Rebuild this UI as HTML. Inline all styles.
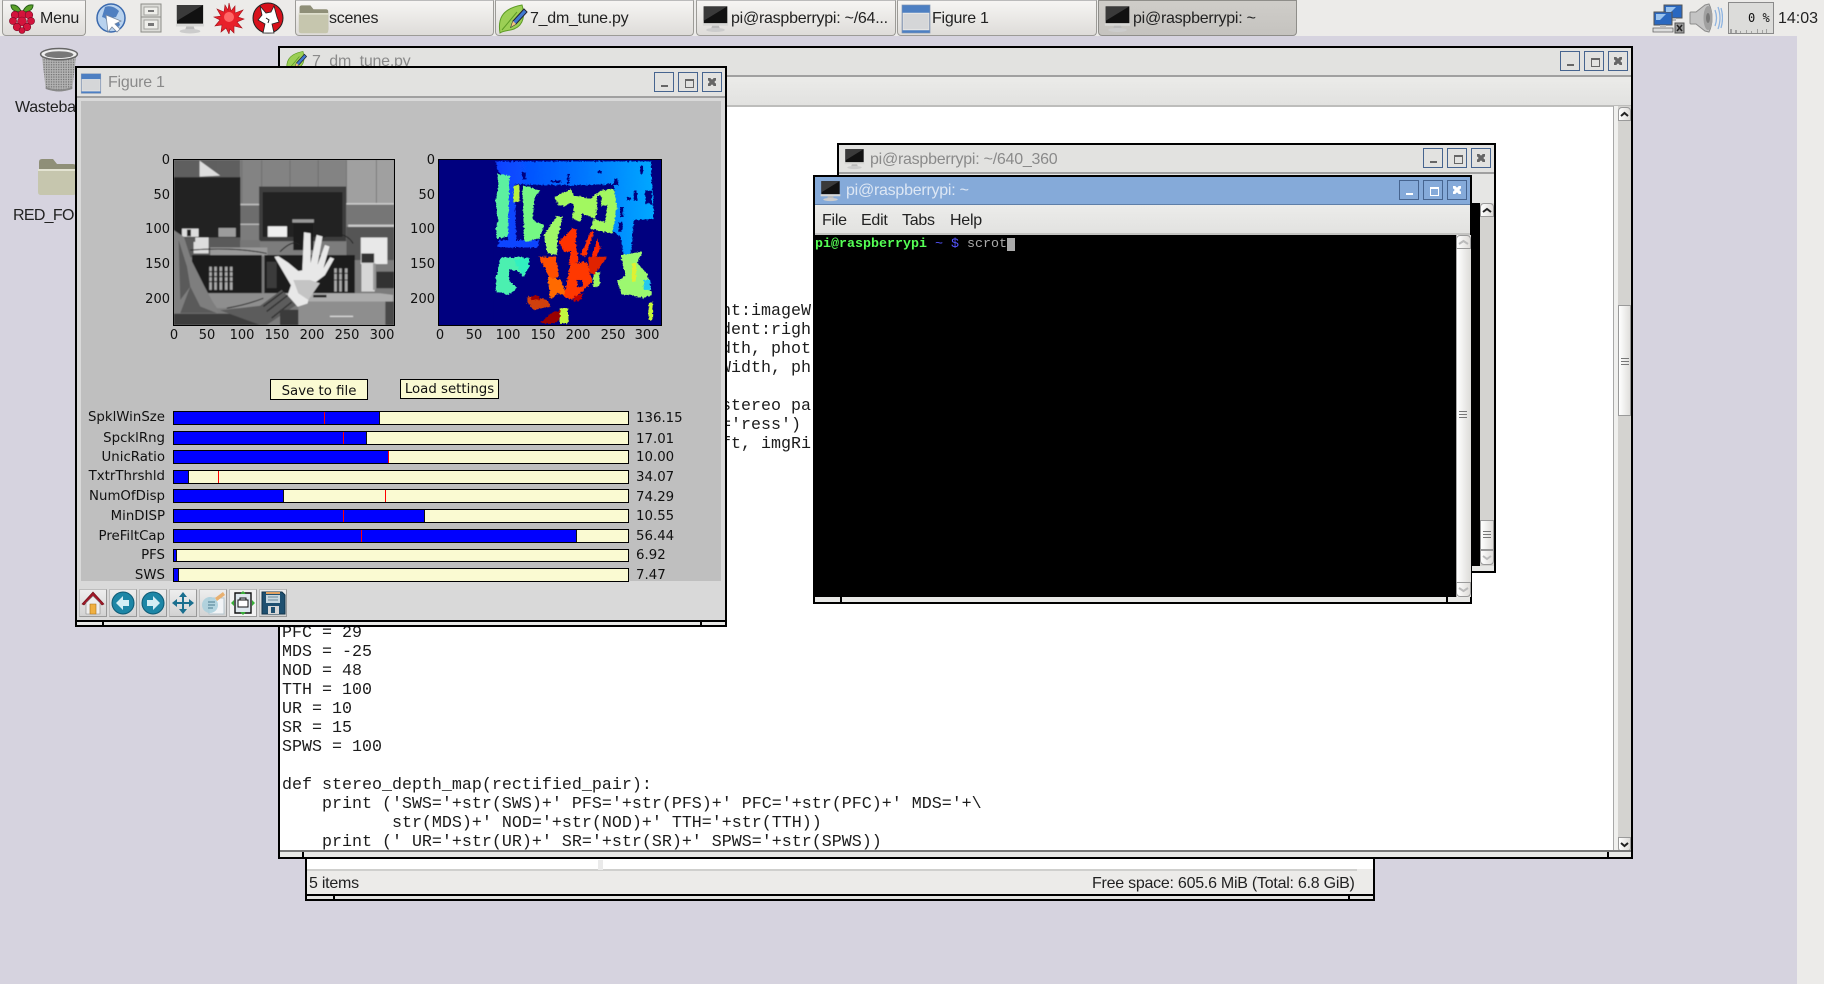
<!DOCTYPE html>
<html><head><meta charset="utf-8"><title>Desktop</title>
<style>
html,body{margin:0;padding:0;width:1824px;height:984px;overflow:hidden;background:#d6d3df}
*{box-sizing:border-box}
body{font-family:"Liberation Sans",sans-serif;position:relative}
.a,.t{position:absolute}
.t{white-space:pre;line-height:1}
.s16{font-size:16px;letter-spacing:-.25px}
.pb{position:absolute;top:0;height:36px;border:1px solid #9c9b97;border-top-color:#bbb;border-radius:0 0 4px 4px;background:linear-gradient(#f6f5f3,#dedcd9);font-size:16px;letter-spacing:-.25px;color:#222}
.pb.on{background:linear-gradient(#cfcdc9,#c5c3bf);border-color:#8f8e8a}
.pb span{position:absolute;top:9px;white-space:pre}
.win{position:absolute;border:2px solid #000;background:#e6e6e4}
.tb{position:absolute;left:0;right:0;top:0;background:#e2e2e0;border-bottom:2px solid #a0a0a0}
.wb{position:absolute;width:20px;height:20px;border:1px solid #46648f;background:transparent}
.wb.m::after{content:"";position:absolute;left:6px;bottom:4px;width:7px;height:2px;background:#666}
.wb.x1::after{content:"";position:absolute;left:6px;top:6px;width:7px;height:6px;border:1px solid #666;border-top-width:2px}
.wb.xb::after{content:"";position:absolute;left:5px;top:5px;width:8px;height:8px;background:linear-gradient(45deg,transparent 36%,#666 36% 64%,transparent 64%),linear-gradient(-45deg,transparent 36%,#666 36% 64%,transparent 64%)}
.act .wb.m::after{background:#fff}.act .wb.x1::after{border-color:#fff}
.act .wb.xb::after{background:linear-gradient(45deg,transparent 36%,#fff 36% 64%,transparent 64%),linear-gradient(-45deg,transparent 36%,#fff 36% 64%,transparent 64%)}
.mono{font-family:"Liberation Mono",monospace;font-size:16.67px;color:#1b1b1b;line-height:19px;height:19px}
.tick{font:13px/14px "DejaVu Sans",sans-serif;color:#111;white-space:pre;position:absolute}
.r{text-align:right;width:40px}.c{text-align:center;width:40px}
.sl{position:absolute;left:173px;width:456px;height:14px;background:#fafad2;border:1.5px solid #000}
.sl i{position:absolute;left:0;top:0;bottom:0;background:#0000ff;border-right:1px solid #111}
.sl b{position:absolute;top:0;bottom:0;width:1px;background:#f00}
.lab{position:absolute;font:13.33px/16px "DejaVu Sans",sans-serif;color:#111;white-space:pre}
.btn{position:absolute;background:#fafad2;border:1.5px solid #000;font:13.33px/16px "DejaVu Sans",sans-serif;color:#111;text-align:center}
.tool{position:absolute;top:589px;width:28px;height:28px;background:linear-gradient(#eee,#d2d2d2);border:1px solid #bdbdbd;border-right-color:#999;border-bottom-color:#999}
.sbb{position:absolute;background:linear-gradient(90deg,#fff,#dedcd9);border:1px solid #9a9a9a;border-radius:0 0 4px 4px}
.grip{position:absolute;width:8px;height:8px;background:repeating-linear-gradient(#777 0 1px,transparent 1px 3px)}
.hnd{position:absolute;width:2px;background:#000}
.chev{position:absolute;fill:none;stroke-width:2}
</style></head>
<body>
<svg width="0" height="0" style="position:absolute">
<defs>
<symbol id="mon" viewBox="0 0 32 32">
<path d="M2 1h28v20H2z" fill="#111"/><path d="M2 1h28L2 18z" fill="#3a3a3a"/><path d="M1 21h30v3H1z" fill="#d8d8d6"/><path d="M12 24h8l1 3h-10z" fill="#bbb"/><ellipse cx="16" cy="29" rx="11" ry="2.4" fill="#ccc"/>
</symbol>
<symbol id="fold" viewBox="0 0 40 40">
<path d="M2 6q0-3 3-3h11l4 5h16q3 0 3 3v23q0 3-3 3H5q-3 0-3-3z" fill="#8f8f78"/><path d="M1 13h38v23q0 3-3 3H4q-3 0-3-3z" fill="#c6c6ae"/><path d="M1 13h38v2H1z" fill="#e3e3d2"/>
</symbol>
<symbol id="fig" viewBox="0 0 24 24">
<path d="M1 1h22v22H1z" fill="#e4e4e4" stroke="#8a9bb5"/><path d="M1 1h22v6H1z" fill="#4d7fc2"/><path d="M1 21h22v2H1z" fill="#4d7fc2"/><path d="M2 8h20v12H2z" fill="#d5d6d8"/>
</symbol>
<symbol id="leaf" viewBox="0 0 32 32">
<path d="M3 30C1 18 3 6 25 2c3 10 2 20-8 24-5 2-10 1-14 4z" fill="#9ccf55" stroke="#5d9b25"/><path d="M5 27L20 9" stroke="#5d9b25" stroke-width="1"/>
<path d="M14 24l2-6 11-12 3 3-11 12z" fill="#3f78d0" stroke="#223"/><path d="M14 24l2-6 3 3z" fill="#f3c480"/>
</symbol>
<filter id="bl"><feGaussianBlur stdDeviation="1.7"/></filter>
<filter id="jag"><feTurbulence type="fractalNoise" baseFrequency="0.16" numOctaves="2" seed="4"/><feDisplacementMap in="SourceGraphic" scale="11" xChannelSelector="R" yChannelSelector="G"/></filter>
<linearGradient id="topb" x1="0" x2="1"><stop offset="0" stop-color="#0a40ff"/><stop offset=".5" stop-color="#0070ff"/><stop offset="1" stop-color="#00a8ff"/></linearGradient>
</defs>
</svg>

<!-- desktop right strip and panel -->
<div class="a" style="left:1797px;top:36px;width:27px;height:948px;background:#ecebe9"></div>
<div class="a" style="left:0;top:0;width:1824px;height:36px;background:#ecebe9"></div>

<div class="pb" style="left:2px;width:84px"><span style="left:37px;top:9px">Menu</span>
<svg class="a" style="left:4px;top:2px" width="30" height="31" viewBox="0 0 30 31"><path d="M14 8C10 0 5 2 4 2c0 4 3 7 10 7zM16 8c4-8 9-6 10-6 0 4-3 7-10 7z" fill="#5aa028" stroke="#24591a"/><g fill="#d3143c" stroke="#7a0b26" stroke-width=".6"><circle cx="15" cy="12" r="4.5"/><circle cx="8" cy="12" r="3.8"/><circle cx="22" cy="12" r="3.8"/><circle cx="6" cy="18" r="3.6"/><circle cx="24" cy="18" r="3.6"/><circle cx="15" cy="18.5" r="4.5"/><circle cx="10" cy="24" r="3.8"/><circle cx="20" cy="24" r="3.8"/><circle cx="15" cy="27.5" r="3"/></g></svg>
</div>
<!-- launchers -->
<svg class="a" style="left:96px;top:2px" width="30" height="32" viewBox="0 0 30 32"><circle cx="15" cy="16" r="14" fill="#b8d2ee" stroke="#3a69ad" stroke-width="1.5"/><path d="M9 5c5-2 10 0 14 4l-3 6-5 1-2 6-4-6-3-1z" fill="#4f7fc0"/><path d="M18 18l3 8 3-3-2-5z" fill="#4f7fc0"/><path d="M10 13l2 17 4-5 5 5 3-3-5-5 6-3z" fill="#fff" stroke="#7788a0" stroke-width=".8"/></svg>
<svg class="a" style="left:139px;top:3px" width="24" height="30" viewBox="0 0 24 30"><path d="M2 1h20v28H2z" fill="#dcdcd8" stroke="#8c8c88"/><path d="M2 14h20" stroke="#8c8c88"/><path d="M5 4h14v8H5zM5 17h14v9H5z" fill="#eeeeea" stroke="#a2a29e"/><path d="M9 7h6v2H9zM9 20h6v3H9z" fill="#777"/></svg>
<svg class="a" style="left:174px;top:4px" width="32" height="30"><use href="#mon" width="32" height="30"/></svg>
<svg class="a" style="left:213px;top:2px" width="32" height="32" viewBox="0 0 32 32"><path d="M16 1l2 8 4-5 0 7 8-3-5 7 6 2-7 3 5 6-8-2 0 7-4-4-1 5-3-6-5 4 1-7-7 1 5-6-6-3 7-1-4-7 7 3 1-7 3 5z" fill="#e8202a" stroke="#a01018" stroke-width=".6"/><circle cx="16" cy="15" r="5" fill="#f66"/></svg>
<svg class="a" style="left:252px;top:2px" width="32" height="32" viewBox="0 0 32 32"><circle cx="16" cy="16" r="15" fill="#d8111b" stroke="#222"/><path d="M8 4l6 7 5-1 3-6 3 11 2 5-7 2 2 9H11l2-9-7-4 4-5z" fill="#fff" stroke="#222" stroke-width=".8"/><path d="M14 16l3 2-1 3" fill="none" stroke="#222"/></svg>

<div class="pb" style="left:295px;width:199px"><span style="left:33px">scenes</span><svg class="a" style="left:2px;top:2px" width="31" height="31"><use href="#fold" width="31" height="31"/></svg></div>
<div class="pb" style="left:495px;width:199px"><span style="left:34px">7_dm_tune.py</span><svg class="a" style="left:1px;top:2px" width="32" height="32"><use href="#leaf" width="32" height="32"/></svg></div>
<div class="pb" style="left:696px;width:200px"><span style="left:34px">pi@raspberrypi: ~/64...</span><svg class="a" style="left:5px;top:4px" width="27" height="28"><use href="#mon" width="27" height="28"/></svg></div>
<div class="pb" style="left:897px;width:200px"><span style="left:34px">Figure 1</span><svg class="a" style="left:3px;top:3px" width="30" height="30"><use href="#fig" width="30" height="30"/></svg></div>
<div class="pb on" style="left:1098px;width:199px"><span style="left:34px">pi@raspberrypi: ~</span><svg class="a" style="left:5px;top:4px" width="27" height="28"><use href="#mon" width="27" height="28"/></svg></div>

<!-- tray -->
<svg class="a" style="left:1652px;top:3px" width="33" height="31" viewBox="0 0 33 31"><path d="M12 2h18v13H12z" fill="#2a68c0" stroke="#555"/><path d="M18 15h6v3h-6z" fill="#bbb"/><path d="M2 9h18v13H2z" fill="#2a68c0" stroke="#555"/><path d="M4 11l10 0-6 6H4zM14 4h10l-5 5h-5z" fill="#9cc4ee"/><path d="M8 22h6v2H8z" fill="#bbb"/><path d="M1 25h20v4H1z" fill="#ddd" stroke="#666" stroke-width=".8"/><path d="M23 20h9v10h-9z" fill="#999" stroke="#555"/><path d="M25 22l5 6m0-6l-5 6" stroke="#222" stroke-width="1.5"/></svg>
<svg class="a" style="left:1689px;top:3px" width="34" height="30" viewBox="0 0 34 30"><path d="M1 10q0-1 1-1h5l9-7 4-1c4 8 4 20 0 28l-4-1-9-7H2q-1 0-1-1z" fill="#c4c4c4" stroke="#8c8c8c"/><ellipse cx="19" cy="15" rx="4.5" ry="12" fill="#a0a0a0"/><ellipse cx="19" cy="15" rx="2" ry="5" fill="#777"/><path d="M26 7q3 8 0 16M29 4q4 11 0 22M32 5q3 10 0 20" fill="none" stroke="#8fb4e0" stroke-width="1.3"/></svg>
<div class="a" style="left:1728px;top:2px;width:46px;height:32px;border:1px solid #8a8a8a;background:#dcdcda"></div>
<svg class="a" style="left:1729px;top:28px" width="44" height="5"><path d="M1 5V1h2v4h3V2h2v3h3V3h1v2h5V2h1v3h4V3h1v2h5V1h1v4h4V2h1v3h3V1h1v4z" fill="#a0a0a0"/></svg>
<div class="t" style="left:1748px;top:11px;font:12px/14px 'DejaVu Sans Mono',monospace;color:#111">0 %</div>
<div class="t" style="left:1778px;top:11px;font-size:16px;color:#222">14:03</div>

<!-- desktop icons -->
<svg class="a" style="left:38px;top:47px" width="42" height="47" viewBox="0 0 40 46"><defs><pattern id="mesh" width="2.4" height="2.4" patternUnits="userSpaceOnUse"><rect width="2.4" height="2.4" fill="#b4b4b4"/><rect width="1.2" height="1.2" fill="#6e6e6e"/></pattern></defs><path d="M3 7l4 34q13 5 26 0l4-34z" fill="url(#mesh)"/><path d="M7 39q13 5 26 0l0 2q-13 5-26 0z" fill="#888"/><ellipse cx="20" cy="7" rx="18" ry="5.5" fill="#eee" stroke="#666" stroke-width="1.5"/><ellipse cx="20" cy="7.5" rx="14" ry="3.3" fill="#777"/></svg>
<div class="t s16" style="left:15px;top:100px;color:#222">Wasteba</div>
<svg class="a" style="left:37px;top:156px" width="40" height="40"><use href="#fold" width="40" height="40"/></svg>
<div class="t" style="left:13px;top:208px;color:#222;font-size:16px;letter-spacing:-.7px">RED_FOL</div>

<!-- file manager -->
<div class="win" style="left:305px;top:800px;width:1070px;height:101px;background:#fff">
  <div class="a" style="left:0;top:67px;right:0;height:2px;background:#cfcfcd"></div>
  <div class="a" style="left:291px;top:58px;width:5px;height:10px;background:#eaeaea"></div>
  <div class="a" style="left:0;right:0;top:69px;height:23px;background:#ecebe9"></div>
  <div class="a" style="left:1050px;right:0;top:67px;height:3px;background:#ecebe9"></div>
  <div class="t s16" style="left:2px;top:74px;color:#222">5 items</div>
  <div class="t s16" style="left:785px;top:74px;color:#222">Free space: 605.6 MiB (Total: 6.8 GiB)</div>
  <div class="a" style="left:0;right:0;top:92px;height:2px;background:#000"></div>
  <div class="a" style="left:0;right:0;top:94px;height:3px;background:#e4e4e2"></div>
  <div class="hnd" style="left:26px;top:92px;height:5px"></div><div class="hnd" style="left:1041px;top:92px;height:5px"></div>
</div>

<!-- editor -->
<div class="win" style="left:278px;top:46px;width:1355px;height:813px;background:#fff">
  <div class="tb" style="height:29px"></div>
  <svg class="a" style="left:5px;top:2px" width="23" height="23"><use href="#leaf" width="23" height="23"/></svg>
  <div class="t s16" style="left:32px;top:6px;color:#8a8a8a">7_dm_tune.py</div>
  <div class="wb m" style="left:1280px;top:3px"></div><div class="wb x1" style="left:1304px;top:3px"></div><div class="wb xb" style="left:1328px;top:3px"></div>
  <div class="a" style="left:0;right:0;top:29px;height:30px;background:linear-gradient(#ebebe9,#e2e2e0);border-bottom:2px solid #bdbdbb"></div>
  <div class="a" style="left:1333px;top:58px;width:5px;height:746px;background:#f0f0ee;border-left:1px solid #a8a8a8"></div>
  <div class="a" style="left:1338px;top:58px;width:13px;height:746px;background:#d4d3d0"></div>
  <div class="sbb" style="left:1338px;top:59px;width:13px;height:14px;border-radius:4px 4px 0 0"></div>
  <svg class="chev" style="left:1340px;top:63px" width="9" height="6" stroke="#222"><path d="M1 5l3.5-3 3.5 3"/></svg>
  <div class="sbb" style="left:1338px;top:257px;width:13px;height:111px;border-radius:0;background:linear-gradient(90deg,#fff,#e0dfdc)"></div>
  <div class="grip" style="left:1341px;top:310px"></div>
  <div class="sbb" style="left:1338px;top:789px;width:13px;height:15px"></div>
  <svg class="chev" style="left:1340px;top:794px" width="9" height="6" stroke="#222"><path d="M1 1l3.5 3 3.5-3"/></svg>
  <div class="a" style="left:0;right:0;top:802px;height:2px;background:#777"></div>
  <div class="a" style="left:0;right:0;top:804px;height:5px;background:#e8e8e6"></div>
  <div class="hnd" style="left:1327px;top:804px;height:5px"></div>
  <div class="hnd" style="left:22px;top:804px;height:5px"></div>
</div>
<div class="a" style="left:727px;top:300px;width:86px;height:200px;overflow:hidden">
<div class="t mono" style="left:-6px;top:2px">nt:imageW</div>
<div class="t mono" style="left:-6px;top:21px">dent:righ</div>
<div class="t mono" style="left:-6px;top:40px">dth, phot</div>
<div class="t mono" style="left:-6px;top:59px">Width, ph</div>
<div class="t mono" style="left:-6px;top:97px">stereo pa</div>
<div class="t mono" style="left:-6px;top:116px">='ress')</div>
<div class="t mono" style="left:-6px;top:135px">ft, imgRi</div>
</div>
<div class="a" style="left:280px;top:620px;width:1330px;height:230px;overflow:hidden">
<div class="t mono" style="left:2px;top:4px">PFC = 29</div>
<div class="t mono" style="left:2px;top:23px">MDS = -25</div>
<div class="t mono" style="left:2px;top:42px">NOD = 48</div>
<div class="t mono" style="left:2px;top:61px">TTH = 100</div>
<div class="t mono" style="left:2px;top:80px">UR = 10</div>
<div class="t mono" style="left:2px;top:99px">SR = 15</div>
<div class="t mono" style="left:2px;top:118px">SPWS = 100</div>
<div class="t mono" style="left:2px;top:156px">def stereo_depth_map(rectified_pair):</div>
<div class="t mono" style="left:2px;top:175px">    print ('SWS='+str(SWS)+' PFS='+str(PFS)+' PFC='+str(PFC)+' MDS='+\</div>
<div class="t mono" style="left:2px;top:194px">           str(MDS)+' NOD='+str(NOD)+' TTH='+str(TTH))</div>
<div class="t mono" style="left:2px;top:213px">    print (' UR='+str(UR)+' SR='+str(SR)+' SPWS='+str(SPWS))</div>
</div>

<!-- back terminal -->
<div class="win" style="left:837px;top:143px;width:659px;height:430px">
  <div class="tb" style="height:29px"></div>
  <svg class="a" style="left:5px;top:3px" width="21" height="22"><use href="#mon" width="21" height="22"/></svg>
  <div class="t s16" style="left:31px;top:7px;color:#8a8a8a">pi@raspberrypi: ~/640_360</div>
  <div class="wb m" style="left:584px;top:3px"></div><div class="wb x1" style="left:608px;top:3px"></div><div class="wb xb" style="left:632px;top:3px"></div>
  <div class="a" style="left:0;right:0;top:58px;height:363px;background:#000"></div>
  <div class="a" style="left:641px;top:58px;width:14px;height:363px;background:#d4d3d0"></div>
  <div class="sbb" style="left:641px;top:58px;width:14px;height:14px;border-radius:4px 4px 0 0"></div>
  <svg class="chev" style="left:643px;top:62px" width="10" height="6" stroke="#222"><path d="M1 5l4-3 4 3"/></svg>
  <div class="sbb" style="left:641px;top:375px;width:14px;height:30px;border-radius:0"></div>
  <div class="grip" style="left:644px;top:386px"></div>
  <div class="sbb" style="left:641px;top:405px;width:14px;height:15px"></div>
  <svg class="chev" style="left:643px;top:410px" width="10" height="6" stroke="#bbb"><path d="M1 1l4 3 4-3"/></svg>
  <div class="a" style="left:0;right:0;top:421px;height:5px;background:#e8e8e6"></div>
</div>

<!-- front terminal -->
<div class="win act" style="left:813px;top:175px;width:659px;height:429px">
  <div class="a" style="left:0;right:0;top:0;height:28px;background:#85aad9;border-bottom:1px solid #5f7fa8"></div>
  <svg class="a" style="left:5px;top:3px" width="21" height="22"><use href="#mon" width="21" height="22"/></svg>
  <div class="t s16" style="left:31px;top:6px;color:#dde7f4">pi@raspberrypi: ~</div>
  <div class="wb m" style="left:584px;top:3px"></div><div class="wb x1" style="left:608px;top:3px"></div><div class="wb xb" style="left:632px;top:3px"></div>
  <div class="a" style="left:0;right:0;top:28px;height:30px;background:linear-gradient(#ececea,#e2e2e0);border-bottom:2px solid #c4c4c2"></div>
  <div class="t s16" style="left:7px;top:36px;color:#222">File</div>
  <div class="t s16" style="left:46px;top:36px;color:#222">Edit</div>
  <div class="t s16" style="left:87px;top:36px;color:#222">Tabs</div>
  <div class="t s16" style="left:135px;top:36px;color:#222">Help</div>
  <div class="a" style="left:0;top:58px;width:641px;height:362px;background:#000"></div>
  <div class="t" style="left:0;top:60px;font:13.33px/15px 'Liberation Mono',monospace;color:#aaa"><b style="color:#55ff55">pi@raspberrypi</b> <span style="color:#5555ff">~ $</span> scrot</div>
  <div class="a" style="left:192px;top:61px;width:8px;height:13px;background:#aaa"></div>
  <div class="a" style="left:641px;top:58px;width:15px;height:362px;background:linear-gradient(90deg,#fff,#dcdbd8);border-left:1px solid #aaa"></div>
  <div class="sbb" style="left:641px;top:58px;width:15px;height:14px;border-radius:4px 4px 0 0"></div>
  <svg class="chev" style="left:643px;top:62px" width="11" height="6" stroke="#bbb"><path d="M1 5l4.5-3 4.5 3"/></svg>
  <div class="grip" style="left:644px;top:234px"></div>
  <div class="sbb" style="left:641px;top:405px;width:15px;height:15px"></div>
  <svg class="chev" style="left:643px;top:410px" width="11" height="6" stroke="#bbb"><path d="M1 1l4.5 3 4.5-3"/></svg>
  <div class="a" style="left:0;right:0;top:420px;height:5px;background:#e8e8e6"></div>
  <div class="hnd" style="left:25px;top:420px;height:5px"></div><div class="hnd" style="left:631px;top:420px;height:5px"></div>
</div>

<!-- Figure window -->
<div class="win" style="left:75px;top:66px;width:652px;height:561px;background:#d9d9d9">
  <div class="tb" style="height:30px"></div>
  <svg class="a" style="left:3px;top:5px" width="22" height="21"><use href="#fig" width="22" height="21"/></svg>
  <div class="t s16" style="left:31px;top:7px;color:#8a8a8a">Figure 1</div>
  <div class="wb m" style="left:577px;top:4px"></div><div class="wb x1" style="left:601px;top:4px"></div><div class="wb xb" style="left:625px;top:4px"></div>
  <div class="a" style="left:4px;top:33px;width:640px;height:480px;background:#bfbfbf"></div>
  <div class="a" style="left:0;right:0;top:552px;height:2px;background:#000"></div>
  <div class="a" style="left:0;right:0;top:554px;height:3px;background:#e8e8e6"></div>
  <div class="hnd" style="left:25px;top:552px;height:5px"></div><div class="hnd" style="left:623px;top:552px;height:5px"></div>
</div>

<!-- photo -->
<svg class="a" style="left:173px;top:159px;border:1.5px solid #000;background:#8a8a8a" width="222" height="167" viewBox="281 58 662 498" preserveAspectRatio="none">
<g filter="url(#bl)">
<rect x="281" y="58" width="662" height="498" fill="#7c7c7c"/>
<rect x="281" y="58" width="200" height="60" fill="#5f5f5f"/>
<rect x="480" y="58" width="320" height="135" fill="#838383"/>
<rect x="800" y="58" width="143" height="132" fill="#a0a0a0"/>
<path d="M415 58v50M485 58v130M545 58v80M630 58v80M715 58v80M800 58v130M890 58v130" stroke="#666" stroke-width="2"/>
<path d="M358 60l62 45-62 3z" fill="#ddd"/>
<rect x="480" y="190" width="60" height="5" fill="#c0c0c0"/><rect x="480" y="248" width="60" height="6" fill="#bbb"/>
<rect x="800" y="188" width="143" height="5" fill="#ccc"/><rect x="805" y="252" width="138" height="8" fill="#ccc"/>
<rect x="810" y="235" width="55" height="15" fill="#c5c5c5"/>
<rect x="480" y="195" width="60" height="55" fill="#6d6d6d"/><rect x="800" y="193" width="143" height="60" fill="#767676"/>
<rect x="281" y="110" width="200" height="182" fill="#222"/>
<rect x="415" y="263" width="52" height="27" fill="#9c9c9c"/>
<path d="M281 292h200v60H281z" fill="#5a5a5a"/>
<path d="M305 265h50v25h-50z" fill="#ddd"/><rect x="320" y="268" width="12" height="20" fill="#222"/>
<path d="M345 292h40v15h-40zM340 305h45v35h-45z" fill="#ddd"/>
<rect x="537" y="138" width="262" height="165" fill="#3e3e3e"/>
<rect x="548" y="155" width="240" height="135" fill="#242424"/>
<rect x="637" y="237" width="65" height="10" fill="#999"/>
<rect x="563" y="258" width="58" height="32" fill="#eee"/>
<rect x="640" y="250" width="60" height="80" fill="#1e1e1e"/>
<rect x="800" y="260" width="143" height="100" fill="#555"/>
<rect x="843" y="292" width="80" height="80" fill="#e8e8e8"/>
<rect x="480" y="300" width="60" height="50" fill="#777"/>
<rect x="390" y="322" width="172" height="26" fill="#999"/>
<path d="M600 335q40-40 60-20M710 300q80-40 110 10M330 330q130-10 230 10" fill="none" stroke="#222" stroke-width="3"/>
<rect x="335" y="345" width="210" height="115" fill="#1d1d1d"/>
<rect x="553" y="345" width="272" height="115" fill="#1a1a1a"/>
<g fill="#a8a8a8"><rect x="387" y="380" width="8" height="70"/><rect x="402" y="380" width="8" height="70"/><rect x="418" y="380" width="8" height="70"/><rect x="434" y="380" width="8" height="70"/><rect x="449" y="380" width="8" height="70"/><rect x="763" y="385" width="8" height="70"/><rect x="778" y="385" width="8" height="70"/><rect x="795" y="385" width="8" height="70"/></g>
<path d="M387 395h70M387 410h70M387 425h70M763 400h40M763 420h40" stroke="#222" stroke-width="3"/>
<rect x="560" y="365" width="30" height="80" fill="#3a3a3a"/>
<rect x="890" y="395" width="53" height="50" fill="#333"/>
<rect x="845" y="340" width="40" height="115" fill="#d6d6d6"/><rect x="845" y="340" width="38" height="28" fill="#333"/><rect x="880" y="370" width="8" height="80" fill="#999"/>
<path d="M380 460H600V505H410z" fill="#8e8e8e"/>
<path d="M600 460H900l40 5V490H655L600 500z" fill="#adadad"/>
<path d="M440 505q60-10 110-30" fill="none" stroke="#2a2a2a" stroke-width="3"/>
<rect x="655" y="485" width="262" height="71" fill="#8e8e8e"/><rect x="917" y="485" width="26" height="71" fill="#4a4a4a"/>
<path d="M750 530h70" stroke="#ddd" stroke-width="4"/>
<path d="M700 465h40v8h-40z" fill="#222"/>
<path d="M281 270l30 20 22 70 40 80 45 85v25H281z" fill="#7e7e7e"/>
<path d="M295 300l25 80 10 60-30 40zM330 440l30 60 50 20H300z" fill="#5a5a5a"/>
<rect x="281" y="522" width="265" height="34" fill="#3e3e3e"/>
<path d="M420 512l120-14 65-48 45 45-90 61H540z" fill="#5c5c5c"/>
<path d="M550 500l60-45M560 515l65-50M575 535l60-48" stroke="#2e2e2e" stroke-width="4"/>
<rect x="600" y="510" width="55" height="46" fill="#3a3a3a"/>
<path d="M583 350l12-2 30 20 30 25 12-2 5-115 20 3 0 90 18-85 18 5-15 85 22-60 14 5-18 65 20-33 12 5-28 50-40 30-12 55-30 10-30-35 10-30z" fill="#e8e8e8"/>
<path d="M640 420l50 0 30 10-35 50-30-20z" fill="#c4c4c4"/>
</g>
</svg>
<div class="tick r" style="left:130px;top:154px">0</div><div class="tick r" style="left:130px;top:189px">50</div><div class="tick r" style="left:130px;top:223px">100</div><div class="tick r" style="left:130px;top:258px">150</div><div class="tick r" style="left:130px;top:293px">200</div>
<div class="tick c" style="left:154px;top:329px">0</div><div class="tick c" style="left:187px;top:329px">50</div><div class="tick c" style="left:222px;top:329px">100</div><div class="tick c" style="left:257px;top:329px">150</div><div class="tick c" style="left:292px;top:329px">200</div><div class="tick c" style="left:327px;top:329px">250</div><div class="tick c" style="left:362px;top:329px">300</div>

<!-- depth -->
<svg class="a" style="left:438px;top:159px;border:1.5px solid #000;background:#00007f" width="224" height="167" viewBox="114 58 668 498" preserveAspectRatio="none">
<g filter="url(#jag)">
<path d="M285 62H750L757 150 760 235 700 240 692 340 670 345 660 290 632 270 645 190 640 130 500 135 330 130 290 90z" fill="url(#topb)"/>
<path d="M320 125h22l4 175h70l-5 22H290l5-22h25z" fill="#0a44ff"/>
<path d="M290 100l36 5-2 100-3 85-32 5-5-30 8-25-8-60 8-30z" fill="#5cf0a0"/>
<rect x="338" y="135" width="18" height="50" fill="#b8f040"/>
<path d="M365 135l55 15-18 20-6 70 34 15-14 40-46 10z" fill="#74f884"/>
<path d="M460 170l50-25 10 20 50 10 30-25 40-5 10 55-15 80-65-15 10-30 35 10 5-50-30 0-5 40-40-15-5 25-25-10 5-35-45-5z" fill="#a2f860"/>
<path d="M430 285l40-60 15 5-15 70 0 45-30-5z" fill="#a0f868"/>
<path d="M300 352l35 0 30-2 20 20-15 40-25-20-20 0 0 30 25 25-30 20-35-10 0-40z" fill="#4cf0b0"/>
<path d="M340 360l45-8v30l-20 25z" fill="#30f0c0"/>
<path d="M660 345l65-10-15 35 30 30 15 65-25 10-40-10-25 0-15-40 25-20z" fill="#9cf870"/>
<rect x="695" y="370" width="12" height="55" fill="#e0f030"/>
<rect x="730" y="420" width="20" height="30" fill="#20c8f0"/>
<path d="M745 490l12-5 0 55-12 0z" fill="#c8f838"/>
<path d="M578 400l20-5 0 45-20 0z" fill="#a0f860"/>
<path d="M515 265l15 0-5 40 10 60-30 10 5-40-20 0-15-30zM570 275l10 0-25 75-15-5z" fill="#ff3000"/>
<path d="M590 295l10 30-20 40-10-5z" fill="#ff2800"/>
<path d="M415 350l50 0 10 60-25 10z" fill="#ff5000"/>
<path d="M440 410l40 10 20 50-30-10-20 20z" fill="#ff6a00"/>
<path d="M510 370l50-5 15 60-30 30-30 25-25-10z" fill="#ff3800"/>
<path d="M565 350l55 0-40 55-15-10z" fill="#e02000"/>
<path d="M520 470l30-10-10 20-20 5z" fill="#c00000"/>
<path d="M380 470l60 10 10 20-50 10-20-20z" fill="#d04010"/>
<path d="M390 470l20-5 8 15-28 0z" fill="#a00000"/>
<path d="M420 550l30-30 35-10-10 30-15 12z" fill="#9a0000"/>
<rect x="478" y="505" width="24" height="46" fill="#c4f840"/>
</g>
<g fill="#00007f" filter="url(#jag)"><rect x="590" y="165" width="12" height="60"/><rect x="500" y="190" width="20" height="12"/><rect x="365" y="95" width="10" height="20"/><rect x="640" y="115" width="12" height="20"/><rect x="700" y="150" width="10" height="30"/><rect x="530" y="420" width="16" height="22"/><rect x="720" y="75" width="8" height="25"/><rect x="680" y="170" width="12" height="10"/><rect x="735" y="150" width="20" height="40"/><rect x="660" y="200" width="8" height="30"/><rect x="590" y="90" width="14" height="8"/><rect x="500" y="100" width="6" height="30"/><rect x="450" y="120" width="30" height="6"/><rect x="655" y="245" width="10" height="30"/></g>
<rect x="114" y="58" width="165" height="498" fill="#00007f"/>
</svg>
<div class="tick r" style="left:395px;top:154px">0</div><div class="tick r" style="left:395px;top:189px">50</div><div class="tick r" style="left:395px;top:223px">100</div><div class="tick r" style="left:395px;top:258px">150</div><div class="tick r" style="left:395px;top:293px">200</div>
<div class="tick c" style="left:420px;top:329px">0</div><div class="tick c" style="left:454px;top:329px">50</div><div class="tick c" style="left:488px;top:329px">100</div><div class="tick c" style="left:523px;top:329px">150</div><div class="tick c" style="left:558px;top:329px">200</div><div class="tick c" style="left:593px;top:329px">250</div><div class="tick c" style="left:627px;top:329px">300</div>

<!-- buttons -->
<div class="btn" style="left:270px;top:379px;width:98px;height:21px;line-height:23px">Save to file</div>
<div class="btn" style="left:400px;top:379px;width:99px;height:20px;line-height:20px">Load settings</div>

<!-- sliders -->
<div class="sl" style="top:411px"><i style="width:206px"></i><b style="left:150px"></b></div>
<div class="sl" style="top:431px"><i style="width:193px"></i><b style="left:169px"></b></div>
<div class="sl" style="top:450px"><i style="width:215px"></i><b style="left:214px"></b></div>
<div class="sl" style="top:470px"><i style="width:15px"></i><b style="left:44px;width:1.4px"></b></div>
<div class="sl" style="top:489px"><i style="width:110px"></i><b style="left:211px;width:1.4px"></b></div>
<div class="sl" style="top:509px"><i style="width:251px"></i><b style="left:169px"></b></div>
<div class="sl" style="top:529px"><i style="width:403px"></i><b style="left:187px"></b></div>
<div class="sl" style="top:549px;height:13px"><i style="width:3px"></i></div>
<div class="sl" style="top:568px;height:14px"><i style="width:5px"></i></div>

<div class="lab" style="left:61px;width:104px;text-align:right;top:410px">SpklWinSze</div>
<div class="lab" style="left:61px;width:104px;text-align:right;top:431px">SpcklRng</div>
<div class="lab" style="left:61px;width:104px;text-align:right;top:450px">UnicRatio</div>
<div class="lab" style="left:61px;width:104px;text-align:right;top:469px">TxtrThrshld</div>
<div class="lab" style="left:61px;width:104px;text-align:right;top:489px">NumOfDisp</div>
<div class="lab" style="left:61px;width:104px;text-align:right;top:509px">MinDISP</div>
<div class="lab" style="left:61px;width:104px;text-align:right;top:529px">PreFiltCap</div>
<div class="lab" style="left:61px;width:104px;text-align:right;top:548px">PFS</div>
<div class="lab" style="left:61px;width:104px;text-align:right;top:568px">SWS</div>

<div class="lab" style="left:636px;top:411px">136.15</div>
<div class="lab" style="left:636px;top:432px">17.01</div>
<div class="lab" style="left:636px;top:450px">10.00</div>
<div class="lab" style="left:636px;top:470px">34.07</div>
<div class="lab" style="left:636px;top:490px">74.29</div>
<div class="lab" style="left:636px;top:509px">10.55</div>
<div class="lab" style="left:636px;top:529px">56.44</div>
<div class="lab" style="left:636px;top:548px">6.92</div>
<div class="lab" style="left:636px;top:568px">7.47</div>

<!-- toolbar -->
<div class="tool" style="left:79px"><svg width="26" height="26" viewBox="0 0 26 26"><path d="M2 14L13 2l11 12-2 1-9-9-9 9z" fill="#a01828" stroke="#701018" stroke-width=".6"/><path d="M6 13l7-7 7 7v11H6z" fill="#eee" stroke="#888" stroke-width=".6"/><path d="M10 14h6v10h-6z" fill="#f0b040" stroke="#a87018" stroke-width=".6"/></svg></div>
<div class="tool" style="left:109px"><svg width="26" height="26" viewBox="0 0 26 26"><circle cx="13" cy="13" r="11" fill="#1d86a6" stroke="#0e5a74"/><path d="M6 13l7-7v4h6v6h-6v4z" fill="#d4eef5"/></svg></div>
<div class="tool" style="left:139px"><svg width="26" height="26" viewBox="0 0 26 26"><circle cx="13" cy="13" r="11" fill="#1d86a6" stroke="#0e5a74"/><path d="M20 13l-7 7v-4H7v-6h6V6z" fill="#d4eef5"/></svg></div>
<div class="tool" style="left:169px"><svg width="26" height="26" viewBox="0 0 26 26"><path d="M13 2l4 5h-3v5h5V9l5 4-5 4v-3h-5v5h3l-4 5-4-5h3v-5H7v3l-5-4 5-4v3h5V7H9z" fill="#1a6f8f"/></svg></div>
<div class="tool" style="left:199px"><svg width="26" height="26" viewBox="0 0 26 26"><path d="M9 8h15v16H9z" fill="#f2f4f6" stroke="#b5c5cc"/><circle cx="10" cy="15" r="8" fill="#a9cfdc" opacity=".85"/><path d="M8 12h7M8 15h7M8 18h5" stroke="#4d7d90"/><path d="M15 8l8-6 2 3-8 6z" fill="#e8b070"/></svg></div>
<div class="tool" style="left:229px;background:#f2f2f2"><svg width="26" height="26" viewBox="0 0 26 26"><path d="M5 3h16v20H5z" fill="#dfe8ee" stroke="#111" stroke-width="1.4"/><path d="M8 10h10v7H8z" fill="#fff" stroke="#111"/><path d="M10 10V8h6v2" fill="none" stroke="#111"/><path d="M13 1l3 3h-6zM13 25l3-3h-6zM1 13l3-3v6zM25 13l-3-3v6z" fill="#38b038"/></svg></div>
<div class="tool" style="left:259px"><svg width="26" height="26" viewBox="0 0 26 26"><path d="M2 2h20l3 3v19H2z" fill="#1f5070" stroke="#12344a"/><path d="M6 2h14v2H6z" fill="#e0a060"/><path d="M6 5h14v8H6z" fill="#c8d8e0"/><path d="M8 7h10M8 10h10" stroke="#6a8898"/><path d="M8 16h11v8H8z" fill="#d8d8d8"/><path d="M11 17h4v6h-4z" fill="#1f5070"/></svg></div>

</body></html>
